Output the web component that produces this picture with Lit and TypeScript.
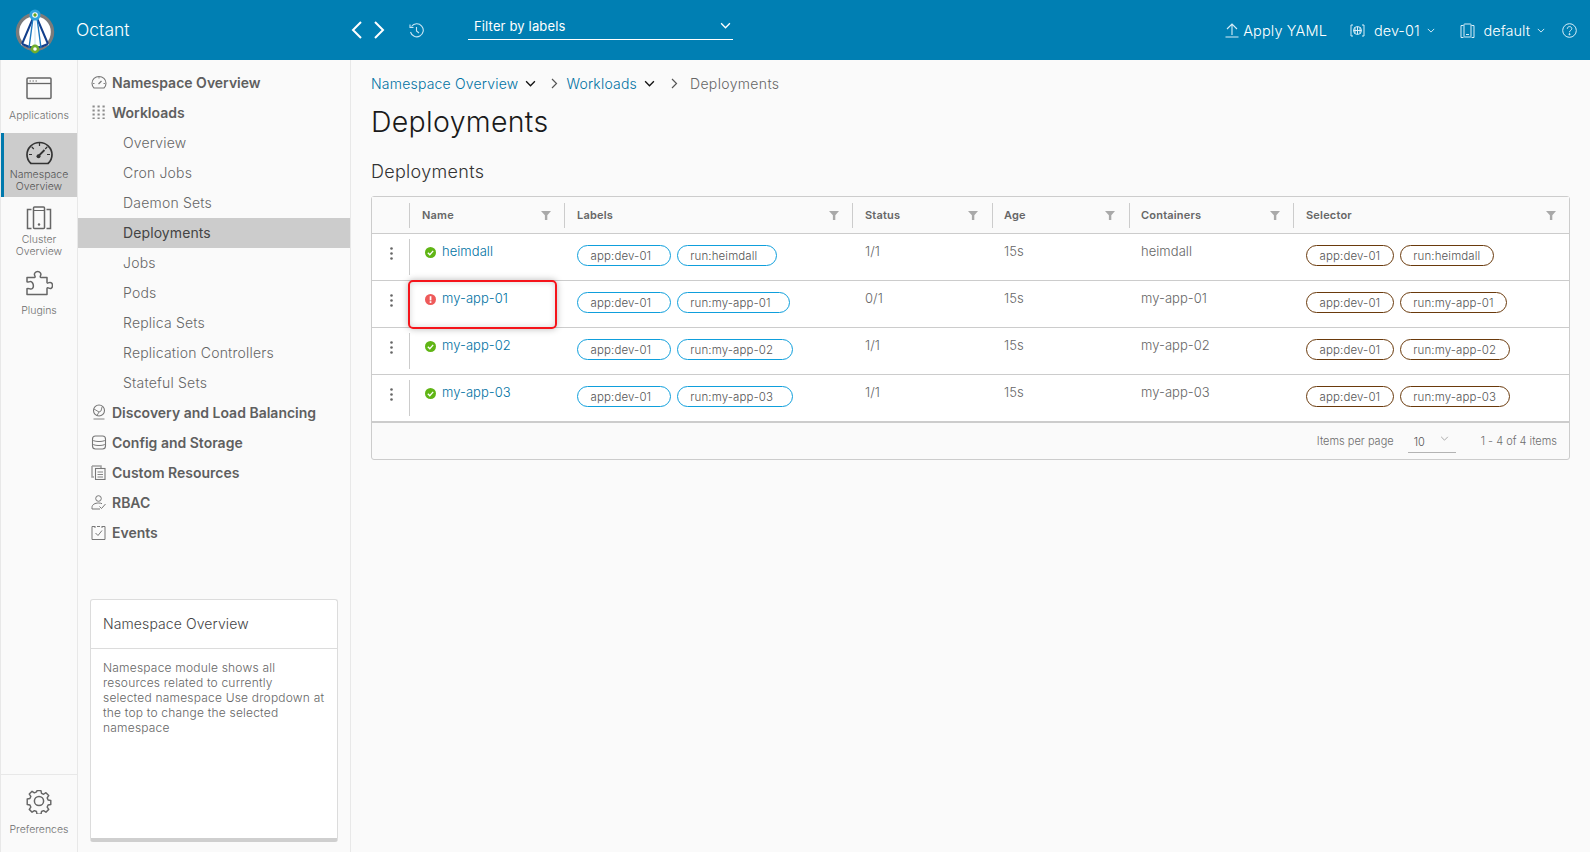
import { LitElement, html, css, svg } from "lit";
import { customElement } from "lit/decorators.js";

const rows = [
  { name: "heimdall", ok: true, status: "1/1" },
  { name: "my-app-01", ok: false, status: "0/1" },
  { name: "my-app-02", ok: true, status: "1/1" },
  { name: "my-app-03", ok: true, status: "1/1" },
];

const ico = (w: number, h: number, vb: string, body: unknown, cls = "") =>
  html`<svg class=${cls} width=${w} height=${h} viewBox=${vb} fill="none" stroke="currentColor">${body}</svg>`;

const chevDown = (w = 9) =>
  ico(w, Math.round(w * 0.6), "0 0 10 6", svg`<path d="M1 1l4 4 4-4" stroke-width="1.2"/>`);

const logo = html`<svg width="44" height="46" viewBox="0 0 44 46" fill="none">
  <circle cx="22" cy="24" r="17.5" fill="#fff" stroke="#7b7b7b" stroke-width="3.4"/>
  <path d="M22 8L8 37l14 4 14-4z" fill="#fff"/>
  <path d="M20.5 9L9 36M23.5 9L35 36M9 36q13 7 26 0" stroke="#123f8c" stroke-width="2"/>
  <path d="M20 10l-4 30M24 10l4 30" stroke="#1c78c0" stroke-width="1.4"/>
  <path d="M22 10v30" stroke="#d7e9f5" stroke-width="1.4"/>
  <circle cx="22" cy="7" r="5.6" fill="#2fa3dd"/>
  <circle cx="22" cy="7" r="2.8" fill="#fff"/>
  <circle cx="22" cy="7" r="1.7" fill="#62a420"/>
  <circle cx="22" cy="41" r="4.4" fill="#71ad2d"/>
  <circle cx="22" cy="41" r="1.8" fill="#fff"/>
</svg>`;

const railIcons = {
  window: ico(26, 24, "0 0 26 24", svg`<rect x="1" y="2" width="24" height="20.5" rx="1" stroke-width="1.5"/><path d="M1 7.5h24" stroke-width="1.3"/><path d="M3.5 5h1.4M6.5 5h1.4M9.5 5h1.4" stroke-width="1.2"/>`),
  gauge: ico(27, 24, "0 0 27 24", svg`<path d="M5 22.5c-2.4-2.2-4-5.2-4-8.8C1 6.9 6.6 1.5 13.5 1.5S26 6.9 26 13.7c0 3.6-1.6 6.6-4 8.8z" stroke-width="1.7"/><path d="M13.5 2v3M3 13.5h3M21 13.5h3M5.8 6l2 2M21.2 6l-2 2" stroke-width="1.2"/><path d="M12.5 15l6-6" stroke-width="1.8"/><circle cx="12.5" cy="15.2" r="2" fill="currentColor" stroke="none"/>`),
  cluster: ico(26, 24, "0 0 26 24", svg`<rect x="7.5" y="1" width="11" height="21.5" rx="1" stroke-width="1.5"/><path d="M8 4.5h10" stroke-width="1"/><circle cx="13" cy="18.5" r="1.2" fill="currentColor" stroke="none"/><path d="M5.5 3.5H1.5v19h4M20.5 3.500h4v19h-4" stroke-width="1.5"/>`),
  plugin: ico(28, 26, "0 0 28 26", svg`<path d="M2 7.5h7.5c1-.3.6-1.2.2-2-.9-1.800.6-4 3-4s3.800 2.200 2.900 4c-.4.800-.7 1.700.4 2h6v5c.3 1 1.200.6 2 .2 1.800-.9 3.500.4 3.500 2.800s-1.700 3.600-3.500 2.700c-.8-.4-1.700-.8-2 .2v6H2v-5.800c1-.3 2-.1 3 .3 1.900.6 3.400-.8 3.400-2.900S6.900 10.900 5 11.600c-1 .4-2 .5-3 .2z" stroke-width="1.5" stroke-linejoin="round"/>`),
  gear: ico(26, 26, "0 0 26 26", svg`<circle cx="13" cy="13" r="4.6" stroke-width="1.5"/><path d="M10.800 1.500h4.400l.6 3 2.300 1 2.600-1.700 3.100 3.100-1.700 2.600 1 2.300 3 .6v4.400l-3 .6-1 2.300 1.700 2.600-3.100 3.100-2.600-1.700-2.300 1-.6 3h-4.400l-.6-3-2.300-1-2.600 1.700-3.100-3.100 1.700-2.600-1-2.300-3-.6V10.800l3-.6 1-2.300-1.700-2.600 3.100-3.100 2.600 1.700 2.300-1z" transform="translate(1.3 1.3) scale(.9)" stroke-width="1.6" stroke-linejoin="round"/>`),
};

const navIcons = {
  gauge: ico(16, 14, "0 0 16 14", svg`<path d="M3 13C1.700 11.800 1 10.200 1 8.300 1 4.500 4.100 1.500 8 1.500s7 3 7 6.800c0 1.900-.7 3.500-2 4.700z" stroke-width="1.1"/><path d="M7.500 9l3-3" stroke-width="1.3"/><path d="M8 2v1.500M2 8.500h1.500M12.500 8.500H14" stroke-width=".9"/>`),
  dots: html`<svg width="15" height="14" viewBox="0 0 15 14" fill="#8b8b8b">${[1, 5, 9, 13].map((y) => [1.5, 6.5, 11.5].map((x) => svg`<rect x=${x} y=${y - 0.5} width="2.2" height="2"/>`))}</svg>`,
  globe: ico(16, 16, "0 0 16 16", svg`<circle cx="8" cy="6.5" r="5.5" stroke-width="1.1"/><path d="M3 5l5 3 2-1 1-4M6 11.500l2-3.500M2.500 15h11" stroke-width=".9"/>`),
  db: ico(16, 15, "0 0 16 15", svg`<rect x="1.5" y="1" width="13" height="13" rx="3" stroke-width="1.1"/><path d="M1.500 5c2 2 11 2 13 0M1.500 9c2 2 11 2 13 0" stroke-width="1"/>`),
  copy: ico(15, 15, "0 0 15 15", svg`<path d="M1 1h9v2M1 1v11h2" stroke-width="1.5" opacity=".7"/><rect x="4.5" y="3.5" width="9.5" height="11" stroke-width="1.1"/><path d="M6.500 7h5.500M6.500 9.500h5.500M6.500 12h5.500" stroke-width=".9"/>`),
  rbac: ico(16, 15, "0 0 16 15", svg`<circle cx="7.5" cy="3.5" r="2.8" stroke-width="1"/><path d="M1 14v-1.500c0-3 3-4.500 6.500-4.500 1.500 0 2.500.2 3.500.7M1 14h8" stroke-width="1"/><path d="M8.500 11.500l2 2 4-4.500" stroke-width="1"/>`),
  events: ico(15, 15, "0 0 15 15", svg`<path d="M4 1.500H1v13h13v-13h-3M6 1.500h3" stroke-width="1"/><path d="M4 1v2M11 1v2" stroke-width="1"/><path d="M4.500 8l2.500 2.500 4-5" stroke-width="1"/>`),
};

const filterIcon = html`<svg class="filter" width="10" height="9" viewBox="0 0 10 9"><path d="M0 0h10L6.300 4.200V9H3.900V4.200z" fill="#a9a9a9"/></svg>`;

const statusIcon = (ok: boolean) =>
  ok
    ? html`<svg class="st" width="11" height="11" viewBox="0 0 11 11"><circle cx="5.5" cy="5.5" r="5.5" fill="#60b515"/><path d="M2.800 5.700l2 2 3.400-3.800" fill="none" stroke="#fff" stroke-width="1.3"/></svg>`
    : html`<svg class="st" width="11" height="11" viewBox="0 0 11 11"><circle cx="5.5" cy="5.5" r="5.5" fill="#ee5a5a"/><rect x="4.7" y="2.2" width="1.7" height="4.2" fill="#fff"/><rect x="4.7" y="7.2" width="1.7" height="1.7" fill="#fff"/></svg>`;

@customElement("app-root")
export class AppRoot extends LitElement {
  static styles = css`
    :host {
      display: block;
      height: 852px;
      width: 1590px;
      overflow: hidden;
      background: #fafafa;
      font-family: "Inter", "Open Sans", sans-serif;
      color: #666;
    }
    .top {
      height: 60px;
      background: #007fb3;
      color: #fff;
      display: flex;
      align-items: center;
    }
    .logo { margin-left: 13px; margin-top: 1px; display: block; height: 46px; }
    .brand { margin-left: 19px; width: 275px; font-size: 17.5px; font-weight: 300; padding-bottom: 2px; }
    .arrow { display: block; margin-right: 12px; }
    .hist { margin-left: 12px; margin-right: 44px; display: block; color: #c8e6f4; }
    .fil {
      width: 265px;
      height: 25px;
      box-sizing: border-box;
      margin-top: -5px;
      padding: 0 2px 3px 6px;
      border-bottom: 1px solid #fff;
      display: flex;
      align-items: center;
      justify-content: space-between;
      font-size: 13px;
      font-weight: 400;
      letter-spacing: 0.15px;
    }
    .spacer { flex: 1; }
    .tool { display: flex; align-items: center; font-size: 14.5px; font-weight: 300; }
    .tool svg { display: block; }
    .apply { margin-right: 23px; gap: 4px; letter-spacing: 0.15px; }
    .ctx { gap: 9px; margin-right: 25px; }
    .ctx.last { margin-right: 17px; }
    .ctx .dn { margin-left: -2px; color: #d8eef8; }
    .help { margin-right: 13px; display: block; color: #d8eef8; }
    .body { display: flex; height: 792px; }
    .rail {
      width: 76px;
      margin-left: 1px;
      border-right: 1px solid #e8e8e8;
      box-shadow: -1px 0 0 #e8e8e8;
      display: flex;
      flex-direction: column;
      flex: none;
    }
    .ri {
      display: flex;
      flex-direction: column;
      align-items: center;
      font-size: 10.5px;
      line-height: 12px;
      color: #6f6f6f;
      text-align: center;
      box-sizing: border-box;
      font-weight: 300;
    }
    .ri svg { display: block; color: #666; }
    .ri span { display: block; }
    .ri.ra { height: 73px; padding-top: 16px; }
    .ri.ra span { margin-top: 10px; }
    .ri.rn { height: 64px; padding-top: 8px; background: #ccc; border-left: 3px solid #0079ad; padding-right: 3px; color: #555; }
    .ri.rn svg { color: #333; }
    .ri.rn span { margin-top: 4px; }
    .ri.rc { height: 64px; padding-top: 9px; }
    .ri.rc span { margin-top: 4px; }
    .ri.rp { height: 60px; padding-top: 9px; }
    .ri.rp span { margin-top: 9px; }
    .rail .grow { flex: 1; }
    .ri.rg { height: 78px; padding-top: 13px; border-top: 1px solid #e8e8e8; }
    .ri.rg span { margin-top: 10px; }
    .nav {
      width: 272px;
      flex: none;
      border-right: 1px solid #e8e8e8;
      display: flex;
      flex-direction: column;
      padding-top: 8px;
    }
    .ni {
      height: 30px;
      box-sizing: border-box;
      padding-bottom: 2px;
      display: flex;
      align-items: center;
      font-size: 14px;
      flex: none;
      color: #666;
      font-weight: 300;
      padding-left: 45px;
      letter-spacing: 0.2px;
    }
    .ni.h { font-weight: 600; padding-left: 13px; color: #5f5f5f; letter-spacing: 0; }
    .ni.h .ic { width: 21px; display: flex; flex: none; color: #777; }
    .ni.on { background: #ccc; color: #444; font-weight: 400; letter-spacing: 0.1px; }
    .card {
      margin: auto 0 10px 12px;
      width: 248px;
      height: 243px;
      box-sizing: border-box;
      background: #fff;
      border: 1px solid #dcdcdc;
      border-bottom: 4px solid #cfcfcf;
      border-radius: 3px;
      display: flex;
      flex-direction: column;
    }
    .ch {
      height: 49px;
      box-sizing: border-box;
      border-bottom: 1px solid #dcdcdc;
      display: flex;
      align-items: center;
      padding: 0 0 2px 12px;
      font-size: 14px;
      font-weight: 300;
      color: #444;
      letter-spacing: 0.1px;
    }
    .cb { padding: 11px 4px 0 12px; font-size: 12px; line-height: 15px; font-weight: 300; color: #666; letter-spacing: 0.2px; white-space: nowrap; }
    .main { flex: 1; padding: 0 20px 0 20px; min-width: 0; }
    .crumbs { height: 46px; display: flex; align-items: center; font-size: 14px; font-weight: 300; letter-spacing: 0.2px; }
    .crumbs a { color: #0072a3; }
    .crumbs svg { display: block; }
    .crumbs .d { margin: 0 15px 0 7px; color: #111; }
    .crumbs .d.last { margin-right: 16px; }
    .crumbs .r { margin-right: 8px; color: #555; }
    .crumbs .r.last { margin-right: 12px; }
    .crumbs .cur { letter-spacing: 0.35px; }
    h1 { margin: 0; font-size: 28.5px; font-weight: 300; color: #1a1a1a; line-height: 32px; height: 44px; letter-spacing: 0.3px; }
    h2 { margin: 0; font-size: 18px; font-weight: 300; color: #333; line-height: 24px; padding-top: 10px; height: 36px; letter-spacing: 0.3px; }
    .tbl {
      position: relative;
      width: 1199px;
      border: 1px solid #ccc;
      border-radius: 3px;
      box-sizing: border-box;
      height: 264px;
      display: flex;
      flex-direction: column;
    }
    .row {
      display: grid;
      grid-template-columns: 37px 155px 288px 140px 137px 164px 1fr;
      flex: none;
      box-sizing: border-box;
      background: #fff;
      height: 47px;
      border-top: 1px solid #ccc;
    }
    .row.hd { height: 36px; background: #fafafa; border-top: 0; }
    .c {
      position: relative;
      box-sizing: border-box;
      padding: 9px 12px 0 13px;
      font-size: 13px;
      font-weight: 300;
      color: #666;
      display: flex;
      align-items: flex-start;
      line-height: 16px;
      letter-spacing: 0.05px;
    }
    .c:nth-child(5), .c:nth-child(6) { padding-left: 12px; }
    .c + .c::before {
      content: "";
      position: absolute;
      left: 0;
      top: 5px;
      bottom: 5px;
      width: 1px;
      background: #ccc;
    }
    .row.body-row .c:not(:nth-child(2))::before { display: none; }
    .hd .c { font-size: 11px; font-weight: 600; color: #666; padding-top: 10px; letter-spacing: 0.2px; }
    .hd .c::before { top: 6px; bottom: 5px; }
    .filter { position: absolute; right: 13px; top: 14px; }
    .hd .c:nth-child(4) .filter { right: 14px; }
    .hd .c:nth-child(5) .filter { right: 14px; }
    .c.kebab { padding: 13px 0 0 1px; display: flex; justify-content: center; }
    .kebab svg { display: block; }
    .name a { color: #0072a3; display: flex; align-items: center; margin-left: 3px; }
    .st { margin-right: 6px; margin-top: 2px; flex: none; }
    .c.chips { display: flex; gap: 6px; padding-top: 11px; }
    .chip {
      height: 21px;
      box-sizing: border-box;
      border: 1px solid #0f9fdc;
      border-radius: 11px;
      padding: 0 18.5px 0 12.5px;
      display: flex;
      align-items: center;
      font-size: 11.5px;
      font-weight: 300;
      color: #555;
      white-space: nowrap;
      letter-spacing: 0.12px;
    }
    .chips.b .chip { border-color: #6a3a0c; padding-right: 12.5px; }
    .foot {
      flex: 1;
      border-top: 2px solid #ccc;
      display: flex;
      align-items: center;
      justify-content: flex-end;
      padding-right: 12px;
      font-size: 11px;
      font-weight: 300;
      color: #6d6d6d;
    }
    .pp {
      width: 48px;
      height: 24px;
      box-sizing: border-box;
      margin: 0 25px 0 14px;
      border-bottom: 1px solid #b3b3b3;
      display: flex;
      align-items: center;
      justify-content: space-between;
      padding: 3px 7px 0 6px;
      color: #555;
    }
    .pp svg { color: #aaa; margin-top: -8px; }
    .mark {
      position: absolute;
      left: 36px;
      top: 83px;
      width: 149px;
      height: 49px;
      box-sizing: border-box;
      border: 2px solid #f5141b;
      border-radius: 5px;
      box-shadow: 0 0 7px rgba(0, 0, 0, 0.28), inset 0 0 6px rgba(0, 0, 0, 0.16);
      pointer-events: none;
    }
  `;

  private chips(name: string, cls: string) {
    return html`<div class="c chips ${cls}">
      <span class="chip">app:dev-01</span><span class="chip">run:${name}</span>
    </div>`;
  }

  render() {
    return html`
      <div class="top">
        <div class="logo">${logo}</div>
        <div class="brand">Octant</div>
        <svg class="arrow" width="11" height="18" viewBox="0 0 11 18" fill="none" stroke="#fff" stroke-width="2"><path d="M10 1L2 9l8 8"/></svg>
        <svg class="arrow" width="11" height="18" viewBox="0 0 11 18" fill="none" stroke="#fff" stroke-width="2"><path d="M1 1l8 8-8 8"/></svg>
        <svg class="hist" width="15" height="15" viewBox="0 0 15 15" fill="none" stroke="currentColor" stroke-width="1.1"><path d="M2.500 3.500A6.500 6.500 0 1 1 1.500 9"/><path d="M1 1.500v3h3.500"/><path d="M7.500 4v4l2.500 2"/></svg>
        <div class="fil"><span>Filter by labels</span>${chevDown(11)}</div>
        <div class="spacer"></div>
        <div class="tool apply">
          <svg width="14" height="16" viewBox="0 0 14 16" fill="none" stroke="#d8eef8" stroke-width="1.1"><path d="M7 13V2M2 7l5-5 5 5M0.500 15h13"/></svg>
          <span>Apply YAML</span>
        </div>
        <div class="tool ctx">
          <svg width="15" height="13" viewBox="0 0 15 13" fill="none" stroke="#d8eef8" stroke-width="1"><path d="M3 1H1v11h2M12 1h2v11h-2"/><circle cx="7.500" cy="6.500" r="4"/><path d="M3.500 6.500h8M7.500 2.500v8M5 3.500v6M10 3.500v6"/></svg>
          <span>dev-01</span><span class="dn">${chevDown(8)}</span>
        </div>
        <div class="tool ctx last">
          <svg width="15" height="15" viewBox="0 0 15 15" fill="none" stroke="#d8eef8" stroke-width="1"><rect x="4" y="1" width="7" height="13" rx=".5"/><path d="M3.500 2.500H1v12h2.500M11.500 2.500H14v12h-2.500M6 11.500h3"/></svg>
          <span>default</span><span class="dn">${chevDown(8)}</span>
        </div>
        <svg class="help" width="15" height="15" viewBox="0 0 15 15" fill="none" stroke="currentColor" stroke-width="1"><circle cx="7.500" cy="7.500" r="6.800"/><path d="M5.300 5.800c0-1.300 1-2.200 2.300-2.200s2.200.9 2.200 2c0 1.800-2.300 1.700-2.300 3.700"/><circle cx="7.500" cy="11.200" r=".6" fill="currentColor"/></svg>
      </div>
      <div class="body">
        <div class="rail">
          <div class="ri ra">${railIcons.window}<span>Applications</span></div>
          <div class="ri rn">${railIcons.gauge}<span>Namespace<br />Overview</span></div>
          <div class="ri rc">${railIcons.cluster}<span>Cluster<br />Overview</span></div>
          <div class="ri rp">${railIcons.plugin}<span>Plugins</span></div>
          <div class="grow"></div>
          <div class="ri rg">${railIcons.gear}<span>Preferences</span></div>
        </div>
        <div class="nav">
          <div class="ni h"><span class="ic">${navIcons.gauge}</span>Namespace Overview</div>
          <div class="ni h"><span class="ic">${navIcons.dots}</span>Workloads</div>
          <div class="ni">Overview</div>
          <div class="ni">Cron Jobs</div>
          <div class="ni">Daemon Sets</div>
          <div class="ni on">Deployments</div>
          <div class="ni">Jobs</div>
          <div class="ni">Pods</div>
          <div class="ni">Replica Sets</div>
          <div class="ni">Replication Controllers</div>
          <div class="ni">Stateful Sets</div>
          <div class="ni h"><span class="ic">${navIcons.globe}</span>Discovery and Load Balancing</div>
          <div class="ni h"><span class="ic">${navIcons.db}</span>Config and Storage</div>
          <div class="ni h"><span class="ic">${navIcons.copy}</span>Custom Resources</div>
          <div class="ni h"><span class="ic">${navIcons.rbac}</span>RBAC</div>
          <div class="ni h"><span class="ic">${navIcons.events}</span>Events</div>
          <div class="card">
            <div class="ch">Namespace Overview</div>
            <div class="cb">Namespace module shows all<br />resources related to currently<br />selected namespace Use dropdown at<br />the top to change the selected<br />namespace</div>
          </div>
        </div>
        <div class="main">
          <div class="crumbs">
            <a>Namespace Overview</a><span class="d">${chevDown(11)}</span>
            <svg class="r" width="7" height="11" viewBox="0 0 7 11" fill="none" stroke="currentColor" stroke-width="1.2"><path d="M1 1l4.500 4.500L1 10"/></svg>
            <a>Workloads</a><span class="d last">${chevDown(11)}</span>
            <svg class="r last" width="7" height="11" viewBox="0 0 7 11" fill="none" stroke="currentColor" stroke-width="1.2"><path d="M1 1l4.500 4.500L1 10"/></svg>
            <span class="cur">Deployments</span>
          </div>
          <h1>Deployments</h1>
          <h2>Deployments</h2>
          <div class="tbl">
            <div class="row hd">
              <div class="c"></div>
              ${["Name", "Labels", "Status", "Age", "Containers", "Selector"].map(
                (h) => html`<div class="c">${h}${filterIcon}</div>`
              )}
            </div>
            ${rows.map(
              (r) => html`<div class="row body-row">
                <div class="c kebab"><svg width="3" height="13" viewBox="0 0 3 13" fill="#666"><circle cx="1.5" cy="1.5" r="1.3"/><circle cx="1.5" cy="6.5" r="1.3"/><circle cx="1.5" cy="11.5" r="1.3"/></svg></div>
                <div class="c name"><a>${statusIcon(r.ok)}${r.name}</a></div>
                ${this.chips(r.name, "")}
                <div class="c">${r.status}</div>
                <div class="c">15s</div>
                <div class="c">${r.name}</div>
                ${this.chips(r.name, "b")}
              </div>`
            )}
            <div class="foot">
              <span>Items per page</span>
              <div class="pp"><span>10</span>${chevDown(9)}</div>
              <span>1 - 4 of 4 items</span>
            </div>
            <div class="mark"></div>
          </div>
        </div>
      </div>
    `;
  }
}
